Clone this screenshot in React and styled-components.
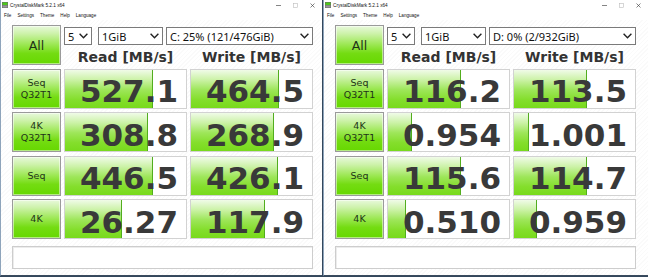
import React from 'react';
import styled, { createGlobalStyle } from 'styled-components';

const Global = createGlobalStyle`
  html, body { margin: 0; padding: 0; }
  body { width: 648px; height: 277px; overflow: hidden; background: #2e4a68; }
`;

const Desktop = styled.div`
  display: flex;
  gap: 1px;
  width: 648px;
  height: 277px;
  background: #33475c;
  align-items: flex-start;
`;

const Window = styled.div`
  width: ${p => p.$w}px;
  height: 276px;
  box-sizing: border-box;
  background-color: #fff;
  background-image: repeating-linear-gradient(135deg, #ffffff 0px, #ffffff 2px, #fafafa 2px, #fafafa 3px);
  border-left: 1px solid #8ea4bb;
  border-bottom: 1px solid #3a4b5e;
  display: flex;
  flex-direction: column;
`;

const TitleBar = styled.div`
  height: 10px;
  display: flex;
  align-items: center;
  padding-left: 1px;
  background: #fff;
`;

const TitleText = styled.span`
  font-family: "Liberation Sans", Arial, sans-serif;
  font-size: 4.7px;
  color: #111;
  margin-left: 2px;
  white-space: nowrap;
`;

const Controls = styled.div`
  margin-left: auto;
  display: flex;
  padding-right: 1px;
`;

const Ctl = styled.div`
  width: 17px;
  height: 10px;
  display: flex;
  align-items: center;
  justify-content: center;
`;

const MenuBar = styled.div`
  height: 10px;
  display: flex;
  align-items: center;
  gap: 6px;
  padding-left: 3px;
  background: #fff;
`;

const MenuItem = styled.span`
  font-family: "Liberation Sans", Arial, sans-serif;
  font-size: 4.6px;
  color: #111;
`;

const Panel = styled.div`
  padding: 5px 0 0 11px;
  display: flex;
  flex-direction: column;
`;

const TopBlock = styled.div`
  display: grid;
  grid-template-columns: 49px 123px 123px;
  grid-template-rows: 20px 20px;
  column-gap: 3px;
`;

const GreenButton = styled.div`
  box-sizing: border-box;
  height: 40px;
  border: 1px solid #9a9a9a;
  background: linear-gradient(to bottom, #e8f9dc 0%, #cdf2aa 20%, #9de855 48%, #74dc12 72%, #66d800 100%);
  box-shadow: inset 0 0 0 1px rgba(255, 255, 255, 0.5);
  display: flex;
  flex-direction: column;
  align-items: center;
  justify-content: center;
  font-family: "DejaVu Sans", Verdana, sans-serif;
  color: #1e3418;
`;

const AllButton = styled(GreenButton)`
  grid-row: 1 / 3;
  font-size: 12.5px;
`;

const LabelText = styled.span`
  font-size: 9.5px;
  line-height: 12px;
  color: #1e3418;
  -webkit-font-smoothing: antialiased;
`;

const SelectRow = styled.div`
  grid-column: 2 / 4;
  display: flex;
  align-items: flex-start;
  padding-top: 2px;
`;

const Select = styled.div`
  box-sizing: border-box;
  height: 18px;
  width: ${p => (p.$w ? `${p.$w}px` : 'auto')};
  flex: ${p => (p.$w ? '0 0 auto' : '1 1 auto')};
  margin-left: ${p => p.$ml || 0}px;
  border: 1px solid #7a7a7a;
  background: #fff;
  display: flex;
  align-items: center;
  padding: 0 3px 0 3px;
  font-family: "Noto Sans", "Open Sans", sans-serif;
  font-size: 11px;
  color: #111;
  white-space: nowrap;
`;

const Chevron = styled.svg`
  margin-left: auto;
  flex: 0 0 auto;
`;

const Header = styled.div`
  display: flex;
  align-items: flex-end;
  justify-content: center;
  font-family: "DejaVu Sans", Verdana, sans-serif;
  font-weight: bold;
  font-size: 14px;
  line-height: 16px;
  color: #333;
`;

const Results = styled.div`
  display: grid;
  grid-template-columns: 49px 123px 123px;
  grid-auto-rows: 40px;
  column-gap: 3px;
  row-gap: 3.5px;
  margin-top: 3.5px;
`;

const Cell = styled.div`
  position: relative;
  box-sizing: border-box;
  height: 40px;
  border: 1px solid #d2d2d2;
  background: #fff;
  display: flex;
  justify-content: flex-end;
  align-items: center;
  padding: 6px 8px 0 0;
  overflow: hidden;
`;

const Bar = styled.div`
  position: absolute;
  left: 0;
  top: 0;
  bottom: 0;
  box-sizing: border-box;
  border-right: 1px solid #52ad1e;
  background: linear-gradient(to bottom, #f0fbe8 0%, #cbf2a6 26%, #9ee65a 52%, #84de2c 78%, #78da1c 100%);
`;

const Value = styled.span`
  position: relative;
  font-family: "DejaVu Sans", Verdana, sans-serif;
  font-weight: bold;
  font-size: 31px;
  line-height: 1;
  color: #393939;
`;

const StatusBar = styled.div`
  box-sizing: border-box;
  width: 301px;
  height: 23px;
  margin-top: 7px;
  border: 1px solid #cdcdcd;
  background: #fff;
  box-shadow: inset 1px 1px 0 #ececec;
`;

const AppIcon = () => (
  <svg width="6" height="6" viewBox="0 0 6 6">
    <rect x="0" y="0" width="6" height="6" fill="#6a6a6a" />
    <rect x="0.5" y="0.5" width="5" height="2.5" fill="#4cc81a" />
    <rect x="0.5" y="3.5" width="5" height="2" fill="#9a9a9a" />
  </svg>
);

const MinIcon = () => (
  <svg width="5" height="5" viewBox="0 0 5 5">
    <line x1="0" y1="2.5" x2="5" y2="2.5" stroke="#333" strokeWidth="0.6" />
  </svg>
);
const MaxIcon = () => (
  <svg width="5" height="5" viewBox="0 0 5 5">
    <rect x="0.5" y="0.5" width="4" height="4" fill="none" stroke="#bbb" strokeWidth="0.6" />
  </svg>
);
const CloseIcon = () => (
  <svg width="5" height="5" viewBox="0 0 5 5">
    <path d="M0.5 0.5 L4.5 4.5 M4.5 0.5 L0.5 4.5" stroke="#333" strokeWidth="0.6" />
  </svg>
);

const ChevronIcon = () => (
  <Chevron width="9" height="6" viewBox="0 0 9 6">
    <path d="M0.6 0.8 L4.5 4.7 L8.4 0.8" fill="none" stroke="#222" strokeWidth="1.4" />
  </Chevron>
);

const windows = [
  {
    w: 322,
    drive: 'C: 25% (121/476GiB)',
    rows: [
      { label: ['Seq', 'Q32T1'], read: '527.1', rp: 73, write: '464.5', wp: 72.5 },
      { label: ['4K', 'Q32T1'], read: '308.8', rp: 68.5, write: '268.9', wp: 68.5 },
      { label: ['Seq'], read: '446.5', rp: 72.5, write: '426.1', wp: 72 },
      { label: ['4K'], read: '26.27', rp: 47.5, write: '117.9', wp: 61 },
    ],
  },
  {
    w: 325,
    drive: 'D: 0% (2/932GiB)',
    rows: [
      { label: ['Seq', 'Q32T1'], read: '116.2', rp: 60.5, write: '113.5', wp: 60.5 },
      { label: ['4K', 'Q32T1'], read: '0.954', rp: 19.5, write: '1.001', wp: 12 },
      { label: ['Seq'], read: '115.6', rp: 60.5, write: '114.7', wp: 60.5 },
      { label: ['4K'], read: '0.510', rp: 15, write: '0.959', wp: 19 },
    ],
  },
];

const DiskMarkWindow = ({ data }) => (
  <Window $w={data.w}>
    <TitleBar>
      <AppIcon />
      <TitleText>CrystalDiskMark 5.2.1 x64</TitleText>
      <Controls>
        <Ctl><MinIcon /></Ctl>
        <Ctl><MaxIcon /></Ctl>
        <Ctl><CloseIcon /></Ctl>
      </Controls>
    </TitleBar>
    <MenuBar>
      <MenuItem>File</MenuItem>
      <MenuItem>Settings</MenuItem>
      <MenuItem>Theme</MenuItem>
      <MenuItem>Help</MenuItem>
      <MenuItem>Language</MenuItem>
    </MenuBar>
    <Panel>
      <TopBlock>
        <AllButton>All</AllButton>
        <SelectRow>
          <Select $w={28}>5<ChevronIcon /></Select>
          <Select $w={65} $ml={6}>1GiB<ChevronIcon /></Select>
          <Select $ml={3}>{data.drive}<ChevronIcon /></Select>
        </SelectRow>
        <Header>Read [MB/s]</Header>
        <Header>Write [MB/s]</Header>
      </TopBlock>
      <Results>
        {data.rows.map((r, i) => (
          <React.Fragment key={i}>
            <GreenButton>
              {r.label.map(t => <LabelText key={t}>{t}</LabelText>)}
            </GreenButton>
            <Cell>
              <Bar style={{ width: `${r.rp}%` }} />
              <Value>{r.read}</Value>
            </Cell>
            <Cell>
              <Bar style={{ width: `${r.wp}%` }} />
              <Value>{r.write}</Value>
            </Cell>
          </React.Fragment>
        ))}
      </Results>
      <StatusBar />
    </Panel>
  </Window>
);

export default function App() {
  return (
    <>
      <Global />
      <Desktop>
        {windows.map((w, i) => <DiskMarkWindow key={i} data={w} />)}
      </Desktop>
    </>
  );
}
